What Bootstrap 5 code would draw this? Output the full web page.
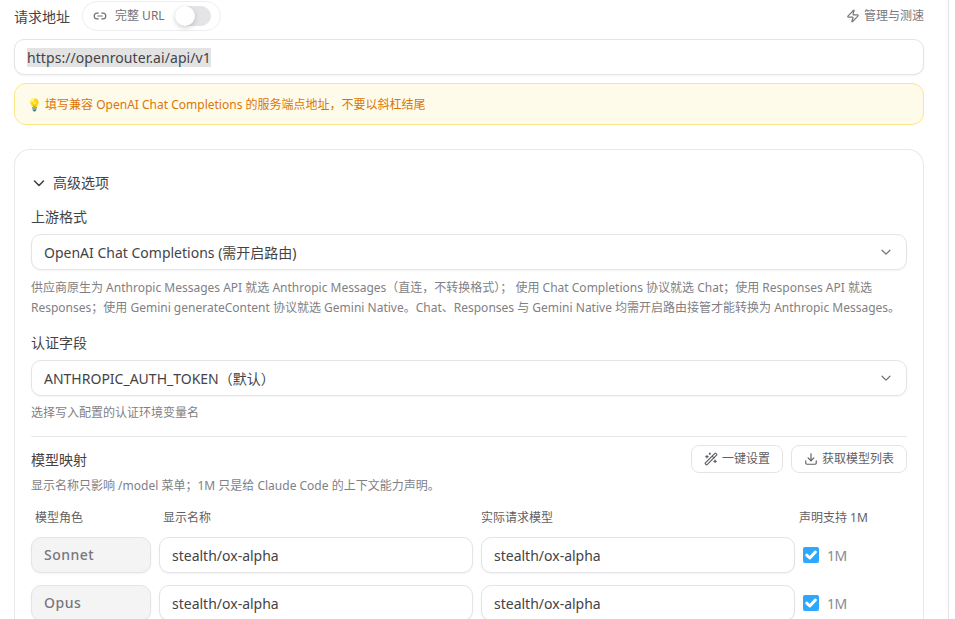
<!DOCTYPE html>
<html lang="en">
<head>
  <meta charset="UTF-8">
  <meta name="viewport" content="width=device-width, initial-scale=1.0">
  <title>Provider Settings</title>
  <link href="https://cdn.jsdelivr.net/npm/bootstrap@5.3.2/dist/css/bootstrap.min.css" rel="stylesheet">
  <style>
    html, body {
      height: 619px;
      overflow: hidden;
    }
    body {
      background: #fff;
      color: #434347;
      font-family: "Noto Sans", "Noto Sans CJK SC", sans-serif;
      font-size: 14px;
    }
    .text-field, .ghost-btn {
      font-family: "Noto Sans", "Noto Sans CJK SC", sans-serif;
    }
    .page-panel {
      width: 949px;
      height: 619px;
      padding: 1px 24px 0 14px;
      border-right: 1px solid #e5e5e7;
    }
    .head-row {
      height: 30px;
      margin-bottom: 8px;
    }
    .field-label {
      font-size: 14px;
      line-height: 22px;
      color: #434347;
    }
    .top-label {
      padding-top: 2px;
    }
    .url-toggle {
      height: 30px;
      width: 139px;
      padding: 0 9px 0 10px;
      border: 1px solid #eeeef0;
      border-radius: 15px;
      font-size: 12px;
      color: #717177;
    }
    .toggle-track {
      width: 36px;
      height: 20px;
      border-radius: 10px;
      background: #e4e4e7;
      position: relative;
    }
    .toggle-knob {
      position: absolute;
      left: 0;
      top: 0;
      width: 20px;
      height: 20px;
      border-radius: 50%;
      background: #fff;
      box-shadow: 0 2px 5px rgba(0, 0, 0, .18);
    }
    .manage-link {
      font-size: 12px;
      color: #77777d;
      text-decoration: none;
    }
    .text-field.form-control,
    .text-field.form-select {
      height: 36px;
      padding: 0 12px;
      border: 1px solid #e4e4e7;
      border-radius: 10px;
      box-shadow: 0 1px 2px rgba(0, 0, 0, .05);
      font-size: 14px;
      line-height: 34px;
      color: #434347;
      background-color: #fff;
    }
    .text-field.url-field {
      line-height: 36px;
      letter-spacing: .07px;
    }
    .text-field.form-select {
      padding-top: 1px;
      background-image: url("data:image/svg+xml,%3csvg xmlns='http://www.w3.org/2000/svg' viewBox='0 0 16 16'%3e%3cpath fill='none' stroke='%23717177' stroke-width='1.4' stroke-linecap='round' stroke-linejoin='round' d='M3.5 6 8 10.5 12.5 6'/%3e%3c/svg%3e");
      background-position: right 13px center;
      background-size: 14px 14px;
    }
    .url-select {
      background: #e3e3e3;
    }
    .hint-box {
      height: 42px;
      margin: 8px 0 24px;
      padding: 0 12px;
      border: 1px solid #fde68a;
      border-radius: 12px;
      background: #fffbeb;
      color: #d97706;
      font-size: 12px;
      line-height: 42px;
    }
    .options-box {
      padding: 16px;
      border: 1px solid #e8e8ea;
      border-bottom: 0;
      border-radius: 16px 16px 0 0;
    }
    .options-head {
      height: 33px;
      font-size: 14px;
      margin-bottom: 7px;
      gap: 6px;
    }
    .form-label-row {
      margin-bottom: 6px;
    }
    .help-line {
      font-size: 12px;
      line-height: 20px;
      color: #7f7f85;
    }
    .first-help {
      margin: 8px 0 14px;
    }
    .auth-help {
      margin: 7px 0 0;
    }
    .mapping-head {
      height: 28px;
      margin-top: 8px;
      margin-bottom: 3px;
    }
    .map-rule {
      margin: 13px 0 0;
      border: 0;
      border-top: 1px solid #e8e8ea;
      opacity: 1;
    }
    .ghost-btn {
      height: 28px;
      padding: 0 12px;
      border: 1px solid #e4e4e7;
      border-radius: 8px;
      background: #fff;
      font-size: 12px;
      color: #5f5f65;
    }
    .map-grid {
      display: grid;
      grid-template-columns: 120px 314px 314px 1fr;
      column-gap: 8px;
      row-gap: 12px;
      margin-top: 12px;
    }
    .col-title {
      font-size: 12px;
      line-height: 20px;
      color: #5f5f65;
      margin-bottom: -3px;
    }
    .col-title-wide {
      margin-left: -4px;
      white-space: nowrap;
    }
    .role-field.form-control {
      background: #f4f4f5;
      color: #77777d;
      font-weight: 500;
      letter-spacing: .5px;
    }
    .one-m {
      font-size: 14px;
      color: #8a8a90;
      letter-spacing: -.5px;
    }
    .one-m .form-check-input {
      width: 16px;
      height: 16px;
      margin: 0;
      border: 0;
      border-radius: 2px;
      background-color: #2ea8ff;
      background-size: 16px 16px;
      background-image: url("data:image/svg+xml,%3csvg xmlns='http://www.w3.org/2000/svg' viewBox='0 0 16 16'%3e%3cpath fill='none' stroke='%23fff' stroke-width='3' stroke-linecap='round' stroke-linejoin='round' d='M3.8 8.2 6.8 11 12.4 5'/%3e%3c/svg%3e");
    }
  </style>
</head>
<body>

<div class="page-panel">
  <div class="head-row d-flex align-items-center justify-content-between">
    <div class="d-flex align-items-center gap-2">
      <span class="field-label top-label me-1">请求地址</span>
      <div class="url-toggle d-flex align-items-center">
        <svg width="14" height="14" viewBox="0 0 24 24" fill="none" stroke="#717177" stroke-width="2" stroke-linecap="round" stroke-linejoin="round"><path d="M9 17H7A5 5 0 0 1 7 7h2"/><path d="M15 7h2a5 5 0 1 1 0 10h-2"/><line x1="8" y1="12" x2="16" y2="12"/></svg>
        <span class="ms-2">完整 URL</span>
        <span class="toggle-track ms-auto"><span class="toggle-knob"></span></span>
      </div>
    </div>
    <a href="#" class="manage-link d-flex align-items-center gap-1">
      <svg width="14" height="14" viewBox="0 0 24 24" fill="none" stroke="#77777d" stroke-width="2" stroke-linecap="round" stroke-linejoin="round"><path d="M4 14a1 1 0 0 1-.78-1.63l9.9-10.2a.5.5 0 0 1 .86.46l-1.92 6.02A1 1 0 0 0 13 10h7a1 1 0 0 1 .78 1.63l-9.9 10.2a.5.5 0 0 1-.86-.46l1.92-6.02A1 1 0 0 0 11 14z"/></svg>
      管理与测速
    </a>
  </div>

  <div class="text-field url-field form-control"><span class="url-select">https://openrouter.ai/api/v1</span></div>
  <div class="hint-box">💡 填写兼容 OpenAI Chat Completions 的服务端点地址，不要以斜杠结尾</div>

  <div class="options-box">
    <div class="options-head d-flex align-items-center">
      <svg width="16" height="16" viewBox="0 0 16 16" fill="none" stroke="#434347" stroke-width="1.6" stroke-linecap="round" stroke-linejoin="round"><path d="M3.5 6 8 10.5 12.5 6"/></svg>
      高级选项
    </div>

    <div class="field-label form-label-row">上游格式</div>
    <select class="text-field form-select">
      <option>OpenAI Chat Completions (需开启路由)</option>
    </select>
    <p class="help-line first-help">供应商原生为 Anthropic Messages API 就选 Anthropic Messages（直连，不转换格式）； 使用 Chat Completions 协议就选 Chat；使用 Responses API 就选 Responses；使用 Gemini generateContent 协议就选 Gemini Native。Chat、Responses 与 Gemini Native 均需开启路由接管才能转换为 Anthropic Messages。</p>

    <div class="field-label form-label-row">认证字段</div>
    <select class="text-field form-select">
      <option>ANTHROPIC_AUTH_TOKEN（默认）</option>
    </select>
    <p class="help-line auth-help">选择写入配置的认证环境变量名</p>

    <hr class="map-rule">

    <div class="mapping-head d-flex align-items-center justify-content-between">
      <span class="field-label top-label">模型映射</span>
      <div class="d-flex gap-2">
        <button class="ghost-btn d-flex align-items-center gap-1">
          <svg width="14" height="14" viewBox="0 0 24 24" fill="none" stroke="#5f5f65" stroke-width="2" stroke-linecap="round" stroke-linejoin="round"><path d="m21.64 3.64-1.28-1.28a1.21 1.21 0 0 0-1.72 0L2.36 18.64a1.21 1.21 0 0 0 0 1.72l1.28 1.28a1.2 1.2 0 0 0 1.72 0L21.64 5.36a1.2 1.2 0 0 0 0-1.72"/><path d="m14 7 3 3"/><path d="M5 6v4"/><path d="M19 14v4"/><path d="M10 2v2"/><path d="M7 8H3"/><path d="M21 16h-4"/><path d="M11 3H9"/></svg>
          一键设置
        </button>
        <button class="ghost-btn d-flex align-items-center gap-1">
          <svg width="14" height="14" viewBox="0 0 24 24" fill="none" stroke="#5f5f65" stroke-width="2" stroke-linecap="round" stroke-linejoin="round"><path d="M21 15v4a2 2 0 0 1-2 2H5a2 2 0 0 1-2-2v-4"/><path d="M7 10l5 5 5-5"/><path d="M12 15V3"/></svg>
          获取模型列表
        </button>
      </div>
    </div>
    <div class="help-line">显示名称只影响 /model 菜单；1M 只是给 Claude Code 的上下文能力声明。</div>

    <div class="map-grid">
      <span class="col-title ps-1">模型角色</span>
      <span class="col-title ps-1">显示名称</span>
      <span class="col-title">实际请求模型</span>
      <span class="col-title col-title-wide">声明支持 1M</span>

      <div class="text-field form-control role-field">Sonnet</div>
      <input class="text-field form-control" type="text" value="stealth/ox-alpha">
      <input class="text-field form-control" type="text" value="stealth/ox-alpha">
      <label class="one-m d-flex align-items-center gap-2"><input class="form-check-input" type="checkbox" checked> 1M</label>

      <div class="text-field form-control role-field">Opus</div>
      <input class="text-field form-control" type="text" value="stealth/ox-alpha">
      <input class="text-field form-control" type="text" value="stealth/ox-alpha">
      <label class="one-m d-flex align-items-center gap-2"><input class="form-check-input" type="checkbox" checked> 1M</label>
    </div>
  </div>
</div>

<script src="https://cdn.jsdelivr.net/npm/bootstrap@5.3.2/dist/js/bootstrap.bundle.min.js"></script>
</body>
</html>
